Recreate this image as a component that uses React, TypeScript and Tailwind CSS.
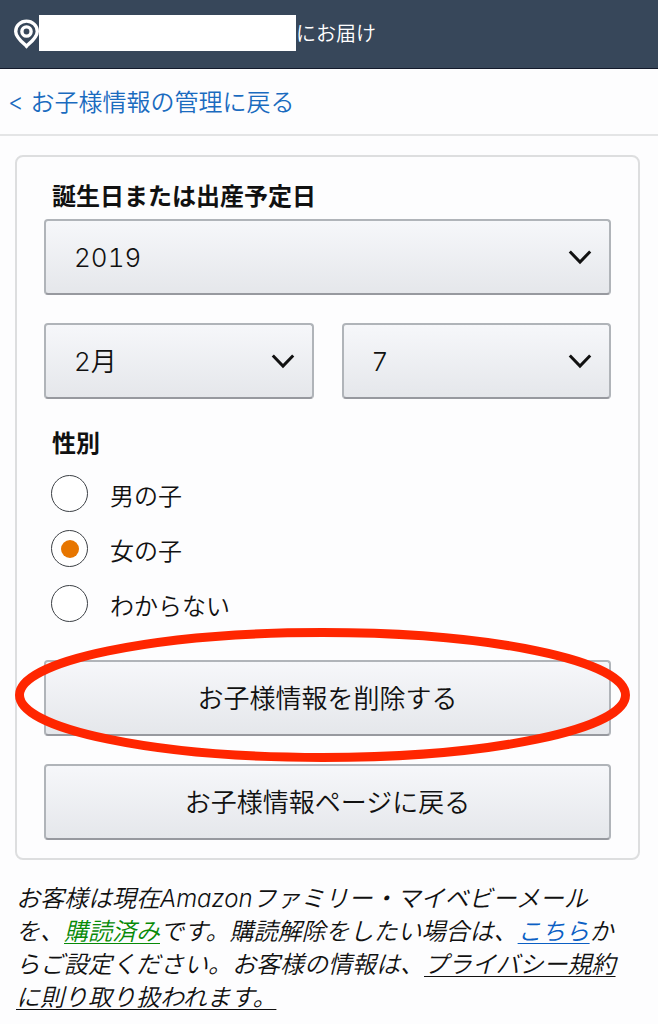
import { useState } from "react";
import type { ReactNode } from "react";

const years = ["2017", "2018", "2019", "2020"];
const months = Array.from({ length: 12 }, (_, i) => `${i + 1}月`);
const days = Array.from({ length: 31 }, (_, i) => `${i + 1}`);
const genders = ["男の子", "女の子", "わからない"];

type SelectProps = {
  label: string;
  options: string[];
  initial: string;
};

const Select = ({ label, options, initial }: SelectProps) => {
  const [value, setValue] = useState(initial);

  return (
    <div className="relative">
      <select
        aria-label={label}
        value={value}
        onChange={(e) => setValue(e.target.value)}
        className="block h-[76px] w-full appearance-none rounded-[4px] border-2 border-[#b0b4b9] border-b-[#97999f] bg-linear-to-b from-[#f6f7fa] to-[#e5e7eb] pt-[2px] pl-7 text-[26px] font-[350] tabular-nums"
      >
        {options.map((option) => (
          <option key={option}>{option}</option>
        ))}
      </select>
      <svg
        viewBox="0 0 24 16"
        fill="none"
        stroke="#111"
        strokeWidth="3"
        className="pointer-events-none absolute top-[31px] right-[19px] h-4 w-6"
      >
        <path d="M1.8 1.5 12 12 22.2 1.5" />
      </svg>
    </div>
  );
};

const Button = ({ children }: { children: ReactNode }) => (
  <button
    type="button"
    className="block h-[76px] w-full rounded-[4px] border-2 border-[#b0b4b9] border-b-[#97999f] bg-linear-to-b from-[#f6f7fa] to-[#e5e7eb] pt-[2px] text-[26px] font-[350]"
  >
    {children}
  </button>
);

const Header = () => (
  <header className="flex h-[69px] items-center border-b border-[#131a2b] bg-[#37475a] pl-[13px] text-white">
    <svg viewBox="0 0 26 30" fill="none" stroke="currentColor" className="h-[30px] w-[26px] shrink-0">
      <path
        d="M13.5 27.2C11 24.6 2.7 18.6 2.7 12.4a10.8 10.3 0 0 1 21.6 0C24.3 18.6 16 24.6 13.5 27.2Z"
        strokeWidth="3.4"
      />
      <circle cx="13.5" cy="12.5" r="4.6" strokeWidth="3.4" />
    </svg>
    <span className="mb-[2px] h-9 w-[257px] bg-white" />
    <span className="text-xl font-[350]">にお届け</span>
  </header>
);

export default function App() {
  const [gender, setGender] = useState("女の子");

  return (
    <div className="min-h-screen bg-[#fdfdfe] font-['Inter','Noto_Sans_CJK_JP',sans-serif] text-2xl font-[350] text-[#111]">
      <Header />
      <nav className="flex h-[67px] items-center border-b-2 border-[#e4e5e6] pt-[2px] pl-2">
        <a href="#children" className="text-[#1a6bbf]">
          &lt; お子様情報の管理に戻る
        </a>
      </nav>

      <main>
        <form className="mt-[19px] mr-[18px] ml-[15px] rounded-lg border-2 border-[#dddedf] px-[27px] pt-[22px] pb-[18px]">
          <h2 className="mb-1 pl-2 leading-9 font-bold">誕生日または出産予定日</h2>
          <Select label="年" options={years} initial="2019" />
          <div className="mt-7 grid grid-cols-2 gap-7">
            <Select label="月" options={months} initial="2月" />
            <Select label="日" options={days} initial="7" />
          </div>

          <fieldset className="mt-[27px]">
            <legend className="pl-2 leading-9 font-bold">性別</legend>
            <div className="mt-[13px] flex flex-col gap-[18px] pl-[7px]">
              {genders.map((name) => (
                <label key={name} className="flex h-[37px] items-center gap-[22px]">
                  <input
                    type="radio"
                    name="gender"
                    checked={gender === name}
                    onChange={() => setGender(name)}
                    className="grid size-[37px] shrink-0 appearance-none place-items-center rounded-full border border-[#3c4045] bg-white before:size-[18px] before:rounded-full checked:before:bg-[#e77600]"
                  />
                  <span className="pt-[6px]">{name}</span>
                </label>
              ))}
            </div>
          </fieldset>

          <div className="relative mt-[38px]">
            <Button>お子様情報を削除する</Button>
            {/* hand-marked ring around the delete button */}
            <svg
              viewBox="0 0 615 134"
              preserveAspectRatio="none"
              fill="none"
              className="pointer-events-none absolute -top-8 -left-[29px] h-[134px] w-[calc(100%+48px)] max-w-none"
            >
              <ellipse
                cx="307.5"
                cy="67"
                rx="303"
                ry="62.5"
                stroke="#ff2600"
                strokeWidth="9"
                vectorEffect="non-scaling-stroke"
              />
            </svg>
          </div>
          <div className="mt-7">
            <Button>お子様情報ページに戻る</Button>
          </div>
        </form>

        <p className="mt-[22px] pr-6 pl-4 leading-[33px] italic">
          お客様は現在Amazonファミリー・マイベビーメールを、
          <a href="#subscribed" className="text-[#078a07] underline decoration-1 underline-offset-3">
            購読済み
          </a>
          です。購読解除をしたい場合は、
          <a href="#settings" className="text-[#0b5fc4] underline decoration-1 underline-offset-3">
            こちら
          </a>
          からご設定ください。お客様の情報は、
          <a href="#privacy" className="underline decoration-1 underline-offset-3">
            プライバシー規約に則り取り扱われます。
          </a>
        </p>
      </main>
    </div>
  );
}
